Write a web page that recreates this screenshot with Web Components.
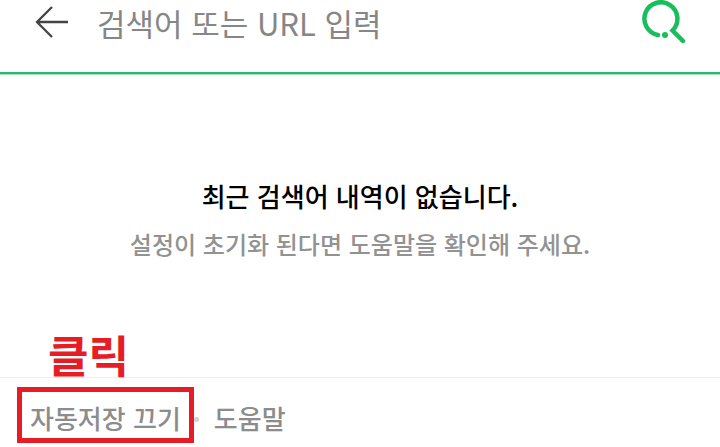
<!DOCTYPE html>
<html lang="ko">
<head>
  <meta charset="UTF-8">
  <meta name="viewport" content="width=device-width, initial-scale=1">
  <title>최근 검색어</title>
  <style>
    body {
      margin: 0;
      background-color: #fff;
      font-family: "Noto Sans CJK KR", "Noto Sans", sans-serif;
    }
  </style>
</head>
<body>
  <search-screen>
    <search-header slot="header" placeholder="검색어 또는 URL 입력"></search-header>
    <empty-history>
      <span slot="title">최근 검색어 내역이 없습니다.</span>
      <span slot="description">설정이 초기화 된다면 도움말을 확인해 주세요.</span>
    </empty-history>
    <history-footer slot="footer">
      <click-marker slot="save" label="클릭">
        <footer-button>자동저장 끄기</footer-button>
      </click-marker>
      <footer-link slot="help" href="#help">도움말</footer-link>
    </history-footer>
  </search-screen>

  <script>
    /**
     * Page frame: header, growing content area and footer.
     */
    class SearchScreen extends HTMLElement {
      constructor() {
        super();
        this.attachShadow({ mode: 'open' });

        this.shadowRoot.innerHTML = `
          <style>
            :host {
              display: flex;
              flex-direction: column;
              min-height: 100vh;
            }

            main {
              flex: 1;
              display: flex;
              flex-direction: column;
              justify-content: center;
              padding-bottom: 12px;
            }
          </style>

          <slot name="header"></slot>
          <main><slot></slot></main>
          <slot name="footer"></slot>
        `;
      }
    }

    /**
     * Top bar with the back button, the search field and the search button.
     */
    class SearchHeader extends HTMLElement {
      constructor() {
        super();
        this.attachShadow({ mode: 'open' });

        this.shadowRoot.innerHTML = `
          <style>
            :host {
              display: block;
              border-bottom: 2px solid #2db570;
              box-shadow: 0 1px 0 #a6e3c2;
            }

            form {
              display: flex;
              align-items: center;
              gap: 27px;
              padding: 0 32px 28px;
            }

            button {
              display: flex;
              padding: 0;
              border: none;
              background: transparent;
              cursor: pointer;
            }

            input {
              flex: 1;
              min-width: 0;
              height: 44px;
              padding: 0;
              border: none;
              outline: none;
              background: transparent;
              color: #222;
              font-family: inherit;
              font-size: 31px;
            }

            input::placeholder {
              color: #868686;
              opacity: 1;
            }
          </style>

          <form role="search">
            <button type="button" class="back-btn" aria-label="뒤로">
              <svg width="38" height="36" viewBox="0 0 38 36" fill="none" stroke="#444" stroke-width="2.3">
                <path d="M20 3 L5 18 L20 33 M5 18 H36"/>
              </svg>
            </button>
            <input type="search" id="query">
            <button type="submit" class="search-btn" aria-label="검색">
              <svg width="48" height="44" viewBox="0 0 48 44" fill="none" stroke="#18bd5c" stroke-width="4.5" stroke-linecap="round">
                <path d="M18 35 A16.5 16.5 0 1 1 32.5 30.5 L43 41"/>
                <circle cx="25" cy="35" r="3" fill="#18bd5c" stroke="none"/>
              </svg>
            </button>
          </form>
        `;
      }

      static get observedAttributes() {
        return ['placeholder'];
      }

      attributeChangedCallback(name, oldValue, newValue) {
        const input = this.shadowRoot.querySelector('input');
        input.placeholder = newValue;
        input.setAttribute('aria-label', newValue);
      }
    }

    /**
     * Message shown when there are no recent searches.
     */
    class EmptyHistory extends HTMLElement {
      constructor() {
        super();
        this.attachShadow({ mode: 'open' });

        this.shadowRoot.innerHTML = `
          <style>
            :host {
              display: block;
              text-align: center;
            }

            h1, p {
              margin: 0;
              font-weight: 500;
              line-height: 48px;
            }

            h1 {
              color: #000;
              font-size: 26px;
            }

            p {
              color: #929292;
              font-size: 24px;
            }
          </style>

          <h1><slot name="title"></slot></h1>
          <p><slot name="description"></slot></p>
        `;
      }
    }

    /**
     * Bottom bar with its two actions and a dot between them.
     */
    class HistoryFooter extends HTMLElement {
      constructor() {
        super();
        this.attachShadow({ mode: 'open' });

        this.shadowRoot.innerHTML = `
          <style>
            :host {
              display: block;
              border-top: 1px solid #eee;
            }

            footer {
              display: flex;
              align-items: center;
              padding: 9px 17px 4px;
            }

            .dot {
              width: 5px;
              height: 5px;
              margin: 8px 15px 0 0;
              border-radius: 50%;
              background-color: #d2d2d2;
            }
          </style>

          <footer>
            <slot name="save"></slot>
            <span class="dot"></span>
            <slot name="help"></slot>
          </footer>
        `;
      }
    }

    /**
     * Red frame around its content with a label above it.
     */
    class ClickMarker extends HTMLElement {
      constructor() {
        super();
        this.attachShadow({ mode: 'open' });

        this.shadowRoot.innerHTML = `
          <style>
            :host {
              display: block;
              position: relative;
              padding: 0 8px;
              border: 5px solid #e71d25;
            }

            .label {
              position: absolute;
              left: 26px;
              bottom: 100%;
              padding-bottom: 8px;
              color: #e71d25;
              font-size: 44px;
              font-weight: 700;
              line-height: 60px;
              white-space: nowrap;
            }
          </style>

          <span class="label"></span>
          <slot></slot>
        `;
      }

      static get observedAttributes() {
        return ['label'];
      }

      attributeChangedCallback(name, oldValue, newValue) {
        this.shadowRoot.querySelector('.label').textContent = newValue;
      }
    }

    class FooterButton extends HTMLElement {
      constructor() {
        super();
        this.attachShadow({ mode: 'open' });

        this.shadowRoot.innerHTML = `
          <style>
            :host {
              display: block;
            }

            button {
              display: block;
              padding: 6px 0 0;
              border: none;
              background: transparent;
              color: #8c8c8c;
              font-family: inherit;
              font-size: 26px;
              font-weight: 500;
              line-height: 40px;
              cursor: pointer;
            }
          </style>

          <button type="button"><slot></slot></button>
        `;
      }
    }

    class FooterLink extends HTMLElement {
      constructor() {
        super();
        this.attachShadow({ mode: 'open' });

        this.shadowRoot.innerHTML = `
          <style>
            :host {
              display: block;
            }

            a {
              display: block;
              padding: 6px 0 0;
              color: #8c8c8c;
              font-size: 26px;
              font-weight: 500;
              line-height: 40px;
              text-decoration: none;
            }
          </style>

          <a><slot></slot></a>
        `;
      }

      static get observedAttributes() {
        return ['href'];
      }

      attributeChangedCallback(name, oldValue, newValue) {
        this.shadowRoot.querySelector('a').setAttribute('href', newValue);
      }
    }

    // Register custom elements
    customElements.define('search-screen', SearchScreen);
    customElements.define('search-header', SearchHeader);
    customElements.define('empty-history', EmptyHistory);
    customElements.define('history-footer', HistoryFooter);
    customElements.define('click-marker', ClickMarker);
    customElements.define('footer-button', FooterButton);
    customElements.define('footer-link', FooterLink);
  </script>
</body>
</html>
